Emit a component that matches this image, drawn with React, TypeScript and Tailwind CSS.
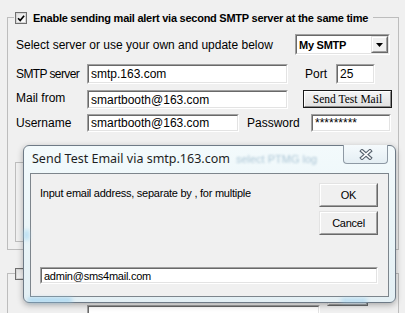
import React from "react";

function CheckBox({ checked }: { checked?: boolean }) {
  return (
    <div className="w-[12px] h-[12px] shrink-0 border border-[#6f6f6f] bg-white flex items-center justify-center">
      <div className="w-[10px] h-[10px] border border-[#d6d6d6] bg-gradient-to-br from-[#e4e4e4] to-white flex items-center justify-center">
        {checked && (
          <svg width="9" height="9" viewBox="0 0 9 9">
            <path d="M1.2 4.2 L3.6 6.8 L8 1.4" fill="none" stroke="#000" strokeWidth="1.9" />
          </svg>
        )}
      </div>
    </div>
  );
}

function Sunken({ className = "", children }: { className?: string; children?: React.ReactNode }) {
  return (
    <div className={`border border-t-[#a0a0a0] border-l-[#a0a0a0] border-r-white border-b-white ${className}`}>
      <div className="h-full w-full border border-t-[#696969] border-l-[#696969] border-r-[#e3e3e3] border-b-[#e3e3e3] bg-white flex items-center pl-[2px] overflow-hidden whitespace-nowrap">
        {children}
      </div>
    </div>
  );
}

function Raised({ className = "", children }: { className?: string; children?: React.ReactNode }) {
  return (
    <div className={`border border-t-[#e3e3e3] border-l-[#e3e3e3] border-r-[#696969] border-b-[#696969] ${className}`}>
      <div className="h-full w-full border border-t-white border-l-white border-r-[#a0a0a0] border-b-[#a0a0a0] bg-[#f0f0f0] flex items-center justify-center">
        {children}
      </div>
    </div>
  );
}

export default function App() {
  return (
    <div className="relative w-[405px] h-[313px] overflow-hidden bg-[#f0f0f0] text-black font-['Liberation_Sans',Arial,sans-serif] text-[12px] leading-[14px] pt-[17px] pl-[7px]">
      {/* Group box 1 */}
      <div className="w-[392px] h-[233px] border border-[#bdbdbd]">
        <div className="-mt-[6px] ml-[6px] w-fit h-[12px] flex items-center bg-[#f0f0f0] pl-[1px] pr-[5px]">
          <CheckBox checked />
          <span className="ml-[6px] font-bold text-[11px] tracking-[-0.25px] whitespace-nowrap">
            Enable sending mail alert via second SMTP server at the same time
          </span>
        </div>

        <div className="mt-[10px] flex items-center h-[21px] pl-[8px]">
          <span className="w-[279px] whitespace-nowrap">Select server or use your own and update below</span>
          <div className="w-[95px] h-[21px] border border-t-[#a0a0a0] border-l-[#a0a0a0] border-r-white border-b-white">
            <div className="h-full border border-t-[#696969] border-l-[#696969] border-r-[#e3e3e3] border-b-[#e3e3e3] bg-white flex items-center pl-[2px]">
              <span className="flex-1 font-bold text-[11px] tracking-[-0.25px]">My SMTP</span>
              <Raised className="w-[17px] h-full">
                <svg width="7" height="4" viewBox="0 0 7 4">
                  <path d="M0 0 H7 L3.5 4 Z" fill="#000" />
                </svg>
              </Raised>
            </div>
          </div>
        </div>

        <div className="mt-[9px] flex items-center h-[20px] pl-[8px]">
          <span className="w-[71px] whitespace-nowrap tracking-[-0.6px]">SMTP server</span>
          <Sunken className="w-[201px] h-[20px]">smtp.163.com</Sunken>
          <span className="ml-[17px] w-[31px]">Port</span>
          <Sunken className="w-[39px] h-[20px]">25</Sunken>
        </div>

        <div className="mt-[6px] flex items-start pl-[8px]">
          <span className="w-[71px] h-[19px] flex items-center -mt-[2px]">Mail from</span>
          <Sunken className="w-[201px] h-[19px]">smartbooth@163.com</Sunken>
          <div className="ml-[15px] w-[89px] h-[18px] border border-[#1a1a1a]">
            <div className="h-full border border-t-white border-l-white border-r-[#8a8a8a] border-b-[#8a8a8a] bg-gradient-to-b from-[#f4f4f4] to-[#e2e2e2] flex items-center justify-center font-['Liberation_Serif',serif] text-[11.5px] leading-[12px]">
              Send Test Mail
            </div>
          </div>
        </div>

        <div className="mt-[5px] flex items-center h-[18px] pl-[8px]">
          <span className="w-[71px]">Username</span>
          <Sunken className="w-[152px] h-[18px]">smartbooth@163.com</Sunken>
          <span className="ml-[8px] w-[64px]">Password</span>
          <Sunken className="w-[80px] h-[18px]">*********</Sunken>
        </div>

        <div className="mt-[30px] ml-[7px] w-[376px] h-[80px] border border-[#bdbdbd]" />
      </div>

      {/* Group box 2 */}
      <div className="mt-[23px] w-[392px] h-[60px] border border-b-0 border-[#bdbdbd]">
        <div className="-mt-[6px] ml-[7px] w-fit h-[12px] flex items-center bg-[#f0f0f0] pr-[4px]">
          <CheckBox />
        </div>
        <div className="mt-[4px] flex items-start pl-[79px]">
          <Sunken className="mt-[21px] w-[233px] h-[20px]" />
          <Raised className="ml-[7px] w-[41px] h-[22px]" />
        </div>
      </div>

      {/* Dialog */}
      <div className="absolute left-[23px] top-[145px] w-[373px] h-[158px] rounded-[6px] border border-[#6e7a86] bg-gradient-to-b from-[#f3fafc] via-[#eaf5f8] to-[#e3eff4] shadow-[0_2px_6px_rgba(0,0,0,0.3)] flex flex-col px-[6px] pb-[5px]">
        <div className="absolute left-[4px] bottom-[0px] w-[44px] h-[4px] bg-[#8fcbee] blur-[2px] opacity-80" />
        <div className="absolute right-[28px] bottom-[0px] w-[26px] h-[3px] bg-[#8fcbee] blur-[2px] opacity-80" />
        <div className="absolute left-[0px] top-[84px] w-[5px] h-[10px] bg-[#9fd3f0] blur-[2px] opacity-70" />
        <div className="h-[27px] flex items-start relative">
          <span className="mt-[5px] ml-[2px] font-['Noto_Sans',sans-serif] text-[12.5px] leading-[16px] text-[#1e1e1e] whitespace-nowrap">
            Send Test Email via smtp.163.com
          </span>
          <span className="mt-[6px] ml-[6px] text-[11px] text-[#7ea4bd] opacity-60 blur-[1.3px] whitespace-nowrap">
            select PTMG log
          </span>
          <div className="ml-auto -mt-[1px] mr-[1px] w-[45px] h-[19px] border border-t-0 border-[#8e99a4] rounded-b-[4px] bg-gradient-to-b from-[#f5fafc] to-[#e4eef3] flex items-center justify-center">
            <svg width="14" height="11" viewBox="0 0 14 11">
              <path d="M3 2 L11 9 M11 2 L3 9" stroke="#5a6570" strokeWidth="3.8" strokeLinecap="square" />
              <path d="M3 2 L11 9 M11 2 L3 9" stroke="#ffffff" strokeWidth="1.6" strokeLinecap="square" />
            </svg>
          </div>
        </div>
        <div className="flex-1 border border-[#7d858c] bg-[#f0f0f0] flex flex-col pl-[9px] pr-[10px] pt-[9px] text-[11px] tracking-[-0.25px]">
          <div className="flex items-start justify-between">
            <span className="mt-[3px] whitespace-nowrap">Input email address, separate by , for multiple</span>
            <div className="flex flex-col gap-[4px] w-[59px]">
              <Raised className="h-[24px] w-full">OK</Raised>
              <Raised className="h-[24px] w-full">Cancel</Raised>
            </div>
          </div>
          <Sunken className="mt-[32px] h-[17px] w-full">admin@sms4mail.com</Sunken>
        </div>
      </div>
    </div>
  );
}
